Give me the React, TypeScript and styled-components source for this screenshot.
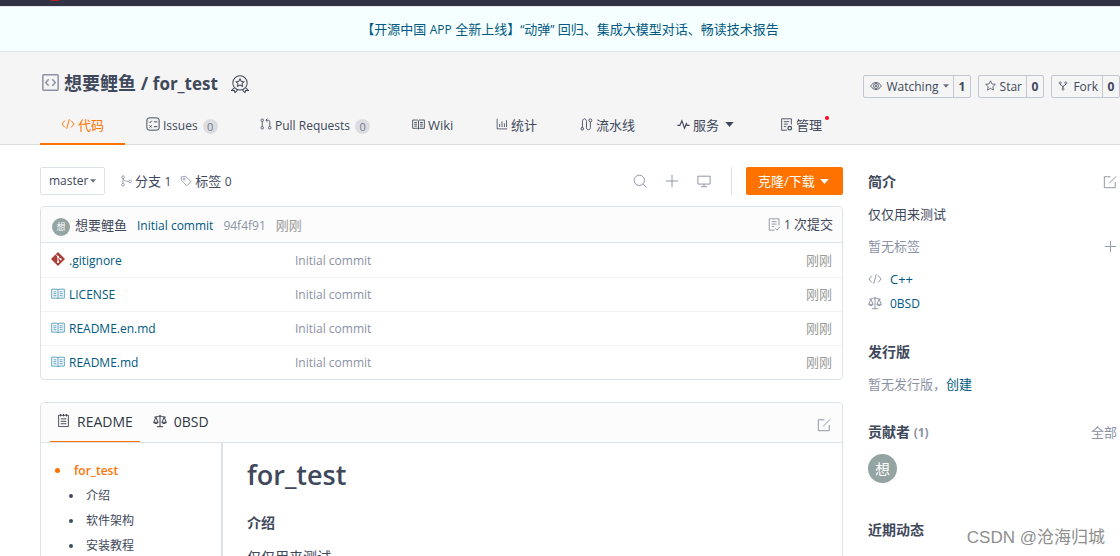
import React from "react";
import styled, { createGlobalStyle, css } from "styled-components";

const ink = "#40485b";
const link = "#005980";
const muted = "#8c92a4";
const orange = "#fe7300";
const line = "#dce3e8";

const GlobalStyle = createGlobalStyle`
  * { box-sizing: border-box; }
  body {
    margin: 0;
    background: #fff;
    color: ${ink};
    font: 13px/20px "Open Sans", "Noto Sans CJK SC", sans-serif;
  }
  a { color: inherit; text-decoration: none; }
  button, select { font: inherit; color: inherit; }
  h1, h2, h3, p, ul { margin: 0; padding: 0; }
`;

const Page = styled.div`
  position: relative;
  height: 100vh;
  overflow: hidden;
`;

const Latin = styled.span<{ $size?: number }>`
  padding-top: 2px;
  font-size: ${(p) => p.$size || 12}px;
`;

const TopBar = styled.div`
  height: 6px;
  padding-left: 48px;
  background: #303343;
  display: flex;
  align-items: flex-start;
`;

const Banner = styled.div`
  height: 46px;
  display: flex;
  align-items: center;
  justify-content: center;
  padding-left: 20px;
  background: #f6ffff;
  border-top: 1px solid #e3e6ee;
  border-bottom: 1px solid #dfe4e4;
  color: ${link};
`;

const RepoHeader = styled.header`
  background: #f5f5f5;
  border-bottom: 1px solid #dcdcdc;
  padding-left: 40px;
`;

const TitleRow = styled.div`
  display: flex;
  justify-content: space-between;
  height: 54px;
  padding-top: 18px;
`;

const Title = styled.h1`
  display: flex;
  align-items: center;
  height: 27px;
  padding-left: 2px;
  font-size: 18px;
  line-height: 27px;
  font-weight: 700;
  svg:first-child { margin-right: 5px; margin-bottom: 2px; color: ${muted}; }
  svg:last-child { margin-left: 13px; margin-top: 1px; }
`;

const Actions = styled.div`
  display: flex;
  gap: 7px;
  padding-top: 5px;
`;

const ActionGroup = styled.div`
  display: flex;
  height: 23px;
  border: 1px solid #c3c6d3;
  border-radius: 2px;
`;

const ActionButton = styled.button<{ $width: number }>`
  display: flex;
  align-items: center;
  justify-content: space-between;
  width: ${(p) => p.$width}px;
  padding: 0 4px 2px 6px;
  border: 0;
  background: none;
`;

const ActionCount = styled.a`
  width: 17px;
  border-left: 1px solid #c3c6d3;
  text-align: center;
  font-weight: 700;
  line-height: 20px;
`;

const Tabs = styled.nav`
  display: flex;
  height: 38px;
`;

const Tab = styled.a<{ $active?: boolean; $width: number }>`
  display: flex;
  align-items: center;
  gap: 3px;
  width: ${(p) => p.$width}px;
  padding-left: 21px;
  margin-bottom: -1px;
  white-space: nowrap;
  border-bottom: 2px solid transparent;
  svg:first-child { margin-bottom: 1px; }
  ${(p) =>
    p.$active &&
    css`
      color: ${orange};
      border-color: ${orange};
    `}
`;

const Badge = styled.span`
  margin-left: 2px;
  margin-top: 3px;
  width: 15px;
  height: 15px;
  border-radius: 8px;
  background: #dcdde0;
  color: #717a99;
  font-size: 11px;
  line-height: 15px;
  text-align: center;
`;

const RedDot = styled.i`
  width: 4px;
  height: 4px;
  margin-bottom: 14px;
  border-radius: 2px;
  background: #ff0020;
`;

const Columns = styled.div`
  display: grid;
  grid-template-columns: minmax(0, 1fr) 252px;
  gap: 25px;
  padding: 22px 0 0 40px;
`;

const Toolbar = styled.div`
  display: flex;
  align-items: center;
  height: 28px;
  margin-bottom: 11px;
`;

const BranchPicker = styled.label`
  display: flex;
  align-items: center;
  width: 65px;
  height: 28px;
  padding: 0 8px;
  margin-right: 15px;
  border: 1px solid ${line};
  border-radius: 2px;
  select {
    appearance: none;
    flex: 1;
    min-width: 0;
    padding: 0;
    border: 0;
    background: none;
    font-size: 12px;
  }
`;

const Stat = styled.a`
  display: flex;
  align-items: center;
  gap: 3px;
  margin-right: 9px;
  svg { color: ${muted}; }
`;

const Tools = styled.div`
  display: flex;
  align-items: center;
  align-self: stretch;
  gap: 18px;
  margin-left: auto;
  padding-right: 20px;
  margin-right: 14px;
  border-right: 1px solid ${line};
`;

const IconButton = styled.button`
  display: flex;
  padding: 0;
  border: 0;
  background: none;
  color: ${muted};
`;

const CloneButton = styled.button`
  display: flex;
  align-items: center;
  justify-content: space-between;
  width: 97px;
  height: 28px;
  padding: 0 14px 0 12px;
  border: 0;
  border-radius: 2px;
  background: ${orange};
  color: #fff;
`;

const Card = styled.section`
  border: 1px solid ${line};
  border-radius: 4px;
  margin-bottom: 22px;
`;

const CommitBar = styled.div`
  display: flex;
  align-items: center;
  height: 36px;
  padding: 0 9px 0 11px;
  border-bottom: 1px solid ${line};
  border-radius: 4px 4px 0 0;
  background: #fcfcfc;
`;

const Avatar = styled.span<{ $size: number }>`
  display: flex;
  align-items: center;
  justify-content: center;
  width: ${(p) => p.$size}px;
  height: ${(p) => p.$size}px;
  border-radius: 50%;
  background: #94a4a3;
  color: #fff;
  font-size: ${(p) => (p.$size > 20 ? 15 : 9)}px;
  ${CommitBar} & { margin-top: 4px; }
`;

const CommitText = styled.a<{ $color: string; $gap: number; $latin?: boolean }>`
  color: ${(p) => p.$color};
  margin-left: ${(p) => p.$gap}px;
  padding-top: ${(p) => (p.$latin ? 2 : 0)}px;
  font-size: ${(p) => (p.$latin ? 12 : 13)}px;
`;

const CommitCount = styled.a`
  display: flex;
  align-items: center;
  gap: 3px;
  margin-left: auto;
  svg { color: ${muted}; }
`;

const Files = styled.table`
  width: 100%;
  border-collapse: collapse;
  table-layout: fixed;
  td {
    height: 34px;
    padding: 2px 10px 0;
    color: ${muted};
    font-size: 12px;
  }
  tr + tr td { border-top: 1px solid #f0f2f5; }
  td:first-child { width: 244px; }
  td:last-child { width: 70px; padding-top: 0; text-align: right; font-size: 13px; color: #999; }
`;

const FileLink = styled.a`
  display: flex;
  align-items: center;
  gap: 4px;
  color: ${link};
  svg { margin-bottom: 3px; }
`;

const ReadmeBar = styled.div`
  display: flex;
  height: 40px;
  padding: 0 11px 0 9px;
  border-bottom: 1px solid ${line};
  border-radius: 4px 4px 0 0;
  background: #fcfcfc;
  ${IconButton} { margin-left: auto; align-items: center; padding-top: 4px; }
`;

const DocTab = styled.a<{ $active?: boolean }>`
  display: flex;
  align-items: center;
  gap: 7px;
  padding: 0 7px;
  margin-right: 6px;
  font-size: 14px;
  color: #303643;
  border-bottom: 1px solid ${(p) => (p.$active ? orange : "transparent")};
  svg { margin-bottom: 3px; }
`;

const ReadmeBody = styled.div`
  display: flex;
`;

const Toc = styled.ul`
  width: 182px;
  padding: 15px 0 0 14px;
  border-right: 2px solid ${line};
  list-style: none;
`;

const TocItem = styled.li<{ $root?: boolean }>`
  display: flex;
  align-items: center;
  gap: ${(p) => (p.$root ? 14 : 13)}px;
  height: 25px;
  padding-left: ${(p) => (p.$root ? 0 : 14)}px;
  font-size: 12px;
  font-weight: ${(p) => (p.$root ? 600 : 400)};
  color: ${(p) => (p.$root ? orange : ink)};
  &::before {
    content: "";
    width: ${(p) => (p.$root ? 5 : 4)}px;
    height: ${(p) => (p.$root ? 5 : 4)}px;
    border-radius: 50%;
    background: ${(p) => (p.$root ? orange : ink)};
  }
`;

const Doc = styled.article`
  flex: 1;
  padding: 12px 24px 40px;
  h1 { font-size: 27px; line-height: 40px; font-weight: 600; margin-bottom: 18px; }
  h2 { font-size: 14px; line-height: 20px; font-weight: 700; margin-bottom: 12px; }
  p { font-size: 14px; line-height: 24px; }
`;

const Sidebar = styled.aside`
  padding-right: 3px;
`;

const SideSection = styled.section<{ $space?: number }>`
  display: flex;
  flex-direction: column;
  gap: 12px;
  padding-top: 5px;
  margin-bottom: ${(p) => p.$space || 23}px;
`;

const SideRow = styled.div`
  display: flex;
  align-items: center;
  justify-content: space-between;
  height: 20px;
  color: ${muted};
`;

const SideTitle = styled.h3`
  font-size: 14px;
  line-height: 20px;
  color: ${ink};
  small { font-size: 12px; color: ${muted}; }
`;

const SideText = styled.p<{ $muted?: boolean }>`
  color: ${(p) => (p.$muted ? muted : ink)};
  a { color: ${link}; }
`;

const MetaList = styled.div`
  display: flex;
  flex-direction: column;
  gap: 3px;
  padding-top: 1px;
`;

const Meta = styled.a`
  display: flex;
  align-items: center;
  gap: 8px;
  color: ${link};
  svg { color: ${muted}; }
`;

const Watermark = styled.div`
  position: absolute;
  right: 15px;
  bottom: 6px;
  font-family: "Liberation Sans", "Noto Sans CJK SC", sans-serif;
  font-size: 17px;
  line-height: 24px;
  color: #8e8e8e;
`;

const paths = {
  code: <path d="M4.5 4 1 8l3.5 4M11.5 4 15 8l-3.5 4M9.5 2.5l-3 11" />,
  repo: <><rect x="0.8" y="0.8" width="14.4" height="14.4" rx="0.8" strokeWidth="1.4" /><path strokeWidth="1.4" d="M6.3 5 3.5 8l2.8 3M9.7 5l2.8 3-2.8 3" /></>,
  medal: <><circle cx="8" cy="7" r="6.4" strokeWidth="0.9" /><path strokeWidth="0.9" d="m8 3.4 1.1 2.2 2.4.4-1.7 1.7.4 2.4L8 9l-2.2 1.1.4-2.4L4.500 6l2.400-.4ZM3 11.500l-2.400 2.200 2.400.1.500 2 2.300-2.600M13 11.500l2.400 2.200-2.400.1-.5 2-2.300-2.600" /></>,
  issues: <><rect x="1" y="1" width="14" height="14" rx="2.500" /><path d="m3.500 5.300 1.200 1.200 2-2.300M9 5.500h4M9 11h4M4 9.500l2.500 2.500M6.500 9.500 4 12" /></>,
  pull: <><circle cx="3" cy="3" r="1.700" /><circle cx="3" cy="13" r="1.700" /><circle cx="13" cy="13" r="1.700" /><path d="M3 4.700v6.600M13 11.300V5c0-1.500-.8-2-2-2H8M10 .8 7.800 3 10 5.200" /></>,
  book: <><path d="M.8 2.500h6L8 3.300l1.200-.8h6v10.200h-6L8 13.500l-1.200-.8h-6ZM8 3.300v10.200" /><path d="M2.700 5.500h3.500M2.700 7.700h3.500M2.700 10h3.500M9.800 5.500h3.500M9.800 7.700h3.500M9.800 10h3.500" /></>,
  chart: <path d="M1.500 1v13.500H15M4.800 12V8M8 12V4.500M11.200 12V7M14 12V3" />,
  flow: <><path d="M3 12.500V5.200C3 2.500 4 1 5.500 1S8 2.500 8 4.500v7c0 2 .8 3 2.300 3s2.500-1.200 2.500-3V5" /><circle cx="2.800" cy="13.300" r="1.600" /><circle cx="12.800" cy="3" r="1.800" /></>,
  pulse: <path strokeWidth="1.400" d="M.5 9h3L6 3.500l3.300 9L11.500 7l1 2h3" />,
  manage: <><path d="M14 8V1H2v14h6.500M4.700 4.500h6.500M4.700 7.500h5M4.700 10.500h3" /><circle cx="12" cy="12.500" r="2.200" strokeWidth="1.500" /></>,
  eye: <><path d="M.8 8C3 4.800 5.300 3.300 8 3.300S13 4.800 15.200 8C13 11.200 10.700 12.700 8 12.700S3 11.200.8 8Z" /><circle cx="8" cy="8" r="3.300" /><circle cx="8" cy="8" r="1" /></>,
  star: <path d="m8 1.200 2.100 4.500 4.900.6-3.600 3.400.9 4.900L8 12.200l-4.300 2.400.9-4.900L1 6.300l4.900-.6Z" />,
  fork: <><circle cx="3.500" cy="3" r="1.700" /><circle cx="12.500" cy="3" r="1.700" /><circle cx="8" cy="13" r="1.700" /><path strokeWidth="1.500" d="M3.500 4.700C3.500 7.500 8 7 8 9.500v1.800M12.500 4.700C12.500 7.500 8 7 8 9.500" /></>,
  branch: <><circle cx="4" cy="2.800" r="1.800" /><circle cx="4" cy="13" r="1.800" /><circle cx="13.500" cy="8.500" r="1.800" /><path d="M4 4.600v6.600M4 4.600c.5 3 3 3.900 7.700 3.900" /></>,
  tag: <><path d="M1.500 2.500 7.500 1.800l7.200 7-5.600 5.600-7-7.200Z" /><circle cx="5.500" cy="5.500" r="1.300" /></>,
  search: <><circle cx="7.200" cy="7.200" r="5.900" /><path d="m11.500 11.500 3.700 3.700" /></>,
  plus: <path d="M8 1v14M1 8h14" />,
  monitor: <path d="M1 2.500h14v9H1ZM8 11.500v3M4.500 14.500h7" />,
  commits: <path d="M13.500 9V1h-12v14H8M4.500 4.500h6M4.500 7.500h6M4.500 10.500h3M9 12.700l2 2.300 4-4.500" />,
  edit: <path d="M8.500 2H1.500v12.500H14V8M7 9.500 15 1.500" />,
  doc: <path d="M2 1.500h12v14H2ZM4.500 0v3M8 0v3M11.500 0v3M4.500 6h7M4.500 9h7M4.500 12h7" />,
  scale: <path d="M8 1v13.500M4.500 14.500h7M1.500 3.500c3 0 4-1 6.500-1s3.500 1 6.500 1M3.300 3.700.8 9.500h5L3.300 3.700ZM12.700 3.700l-2.500 5.800h5L12.700 3.700ZM.8 9.500c.5 2 4.500 2 5 0M10.200 9.500c.5 2 4.500 2 5 0" />,
};

const Glyph = styled.svg`
  flex-shrink: 0;
  fill: none;
`;

function Icon({ name, size = 14, color }: { name: keyof typeof paths; size?: number; color?: string }) {
  return (
    <Glyph width={size} height={size} viewBox="0 0 16 16" stroke={color || "currentColor"} strokeWidth="1.1" aria-hidden="true">
      {paths[name]}
    </Glyph>
  );
}

function Caret({ width = 7, color = "currentColor" }: { width?: number; color?: string }) {
  return (
    <Glyph width={width} height={width > 7 ? 5 : 4} viewBox="0 0 10 6" aria-hidden="true">
      <path d="M0 0h10L5 6Z" fill={color} />
    </Glyph>
  );
}

function GitIcon() {
  return (
    <svg width="14" height="14" viewBox="0 0 16 16" aria-hidden="true">
      <path d="M8 .2 15.800 8 8 15.800.2 8Z" fill="#ab3c38" stroke="#ab3c38" strokeWidth="0.4" strokeLinejoin="round" />
      <path d="M5.500 2.800 8 5.300v6M8 5.500l3 3" stroke="#fff" strokeWidth="1.100" fill="none" />
      <circle cx="8" cy="5.400" r="1.200" fill="#fff" /><circle cx="8" cy="11.300" r="1.300" fill="#fff" /><circle cx="11" cy="8.400" r="1.200" fill="#fff" />
    </svg>
  );
}

const files = [".gitignore", "LICENSE", "README.en.md", "README.md"];

export default function App() {
  return (
    <Page>
      <GlobalStyle />
      <TopBar>
        <svg width="14" height="2" viewBox="0 0 14 2" aria-hidden="true"><path d="M1 0h12Q7 2 1 0Z" fill="#c71d23" /></svg>
      </TopBar>
      <Banner><a href="#app">【开源中国 <Latin>APP</Latin> 全新上线】<Latin>“</Latin>动弹<Latin>” </Latin>回归、集成大模型对话、畅读技术报告</a></Banner>
      <RepoHeader>
        <TitleRow>
          <Title>
            <Icon name="repo" size={17} />
            <a href="#repo">想要鲤鱼 / <Latin $size={17}>for_test</Latin></a>
            <Icon name="medal" size={18} />
          </Title>
          <Actions>
            <ActionGroup>
              <ActionButton $width={89}><Icon name="eye" size={12} /><Latin>Watching</Latin><Caret width={6} color="#6b7183" /></ActionButton>
              <ActionCount href="#watchers"><Latin>1</Latin></ActionCount>
            </ActionGroup>
            <ActionGroup>
              <ActionButton $width={47}><Icon name="star" size={11} /><Latin>Star</Latin></ActionButton>
              <ActionCount href="#stars"><Latin>0</Latin></ActionCount>
            </ActionGroup>
            <ActionGroup>
              <ActionButton $width={50}><Icon name="fork" size={10} /><Latin>Fork</Latin></ActionButton>
              <ActionCount href="#forks"><Latin>0</Latin></ActionCount>
            </ActionGroup>
          </Actions>
        </TitleRow>
        <Tabs>
          <Tab href="#code" $active $width={85}><Icon name="code" />代码</Tab>
          <Tab href="#issues" $width={114}><Icon name="issues" /><Latin>Issues</Latin><Badge>0</Badge></Tab>
          <Tab href="#pulls" $width={152}><Icon name="pull" size={12} /><Latin>Pull Requests</Latin><Badge>0</Badge></Tab>
          <Tab href="#wiki" $width={84}><Icon name="book" size={13} />Wiki</Tab>
          <Tab href="#stats" $width={84}><Icon name="chart" size={12} />统计</Tab>
          <Tab href="#pipeline" $width={97}><Icon name="flow" size={13} />流水线</Tab>
          <Tab href="#services" $width={103}><Icon name="pulse" size={13} />服务&nbsp;<Caret width={9} /></Tab>
          <Tab href="#manage" $width={84}><Icon name="manage" size={13} />管理<RedDot /></Tab>
        </Tabs>
      </RepoHeader>
      <Columns>
        <main>
          <Toolbar>
            <BranchPicker>
              <select aria-label="master"><option>master</option></select>
              <Caret width={6} color="#6b7183" />
            </BranchPicker>
            <Stat href="#branches"><Icon name="branch" size={12} /><span>分支 <Latin>1</Latin></span></Stat>
            <Stat href="#tags"><Icon name="tag" size={12} /><span>标签 <Latin>0</Latin></span></Stat>
            <Tools>
              <IconButton aria-label="搜索"><Icon name="search" /></IconButton>
              <IconButton aria-label="新建"><Icon name="plus" /></IconButton>
              <IconButton aria-label="Web IDE"><Icon name="monitor" /></IconButton>
            </Tools>
            <CloneButton>克隆/下载<Caret width={9} /></CloneButton>
          </Toolbar>
          <Card>
            <CommitBar>
              <Avatar $size={18}>想</Avatar>
              <CommitText href="#user" $color={ink} $gap={5}>想要鲤鱼</CommitText>
              <CommitText href="#commit" $color={link} $gap={10} $latin>Initial commit</CommitText>
              <CommitText href="#sha" $color={muted} $gap={10} $latin>94f4f91</CommitText>
              <CommitText href="#time" $color="#999999" $gap={10}>刚刚</CommitText>
              <CommitCount href="#commits"><Icon name="commits" size={13} /><span><Latin>1 </Latin>次提交</span></CommitCount>
            </CommitBar>
            <Files>
              <tbody>
                {files.map((f) => (
                  <tr key={f}>
                    <td>
                      <FileLink href={"#" + f}>
                        {f === ".gitignore" ? <GitIcon /> : <Icon name="book" color="#5aa0bd" />}
                        {f}
                      </FileLink>
                    </td>
                    <td>Initial commit</td>
                    <td>刚刚</td>
                  </tr>
                ))}
              </tbody>
            </Files>
          </Card>
          <Card>
            <ReadmeBar>
              <DocTab href="#readme" $active><Icon name="doc" size={13} />README</DocTab>
              <DocTab href="#license"><Icon name="scale" size={14} />0BSD</DocTab>
              <IconButton aria-label="编辑"><Icon name="edit" /></IconButton>
            </ReadmeBar>
            <ReadmeBody>
              <Toc>
                <TocItem $root><a href="#t0">for_test</a></TocItem>
                <TocItem><a href="#t1">介绍</a></TocItem>
                <TocItem><a href="#t2">软件架构</a></TocItem>
                <TocItem><a href="#t3">安装教程</a></TocItem>
              </Toc>
              <Doc>
                <h1>for_test</h1>
                <h2>介绍</h2>
                <p>仅仅用来测试</p>
              </Doc>
            </ReadmeBody>
          </Card>
        </main>
        <Sidebar>
          <SideSection>
            <SideRow><SideTitle>简介</SideTitle><IconButton aria-label="编辑简介"><Icon name="edit" /></IconButton></SideRow>
            <SideText>仅仅用来测试</SideText>
            <SideRow>暂无标签<IconButton aria-label="添加标签"><Icon name="plus" size={13} /></IconButton></SideRow>
            <MetaList>
              <Meta href="#cpp"><Icon name="code" />C++</Meta>
              <Meta href="#0bsd"><Icon name="scale" /><Latin>0BSD</Latin></Meta>
            </MetaList>
          </SideSection>
          <SideSection>
            <SideTitle>发行版</SideTitle>
            <SideText $muted>暂无发行版，<a href="#new">创建</a></SideText>
          </SideSection>
          <SideSection $space={32}>
            <SideRow><SideTitle>贡献者 <small>(1)</small></SideTitle><a href="#all">全部</a></SideRow>
            <Avatar $size={29}>想</Avatar>
          </SideSection>
          <SideSection>
            <SideTitle>近期动态</SideTitle>
          </SideSection>
        </Sidebar>
      </Columns>
      <Watermark>CSDN @沧海归城</Watermark>
    </Page>
  );
}
